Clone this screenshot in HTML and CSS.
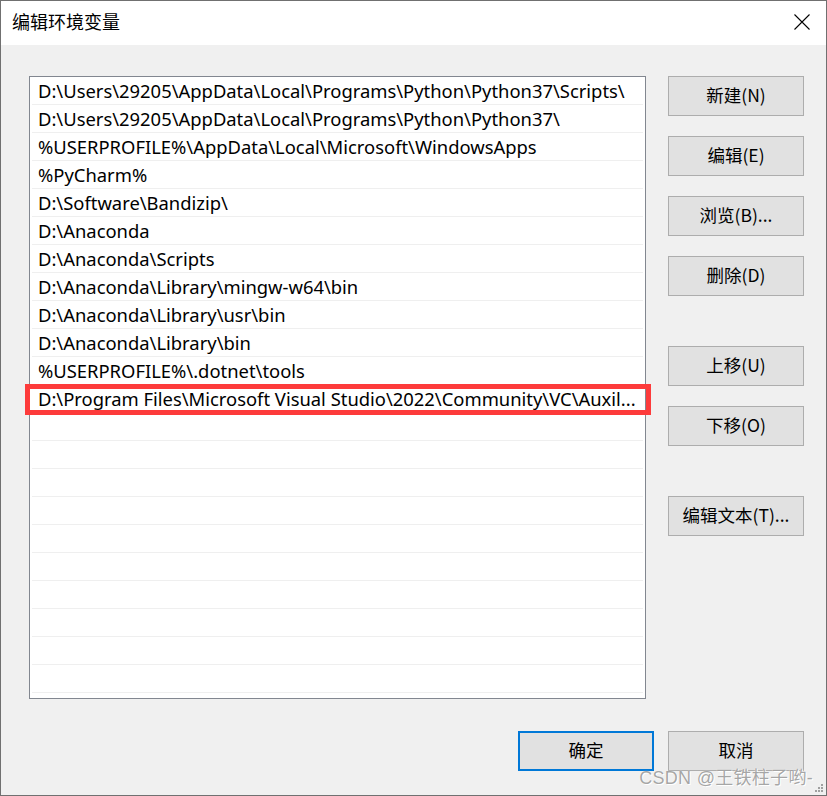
FILE: index.html
```html
<!DOCTYPE html>
<html lang="zh-CN">
<head>
<meta charset="utf-8">
<title>编辑环境变量</title>
<link rel="stylesheet" href="styles.css">
</head>
<body>
<div class="window">
  <div class="titlebar">
    <span class="title">编辑环境变量</span>
    <svg class="close" width="16" height="16" viewBox="0 0 16 16" aria-label="关闭">
      <path d="M0.5 0.5 L15.5 15.5 M15.5 0.5 L0.5 15.5" stroke="#000" stroke-width="1.1" fill="none"/>
    </svg>
  </div>
  <div class="content">
    <div class="main">
      <div class="list">
        <div class="row"><span class="text">D:\Users\29205\AppData\Local\Programs\Python\Python37\Scripts\</span></div>
        <div class="row"><span class="text">D:\Users\29205\AppData\Local\Programs\Python\Python37\</span></div>
        <div class="row"><span class="text">%USERPROFILE%\AppData\Local\Microsoft\WindowsApps</span></div>
        <div class="row"><span class="text">%PyCharm%</span></div>
        <div class="row"><span class="text">D:\Software\Bandizip\</span></div>
        <div class="row"><span class="text">D:\Anaconda</span></div>
        <div class="row"><span class="text">D:\Anaconda\Scripts</span></div>
        <div class="row"><span class="text">D:\Anaconda\Library\mingw-w64\bin</span></div>
        <div class="row"><span class="text">D:\Anaconda\Library\usr\bin</span></div>
        <div class="row"><span class="text">D:\Anaconda\Library\bin</span></div>
        <div class="row"><span class="text">%USERPROFILE%\.dotnet\tools</span></div>
        <div class="row row-marked"><span class="text">D:\Program Files\Microsoft Visual Studio\2022\Community\VC\Auxil...</span><span class="mark"></span></div>
        <div class="row"></div>
        <div class="row"></div>
        <div class="row"></div>
        <div class="row"></div>
        <div class="row"></div>
        <div class="row"></div>
        <div class="row"></div>
        <div class="row"></div>
        <div class="row"></div>
        <div class="row"></div>
      </div>
      <div class="side">
        <button class="btn">新建(N)</button>
        <button class="btn">编辑(E)</button>
        <button class="btn">浏览(B)...</button>
        <button class="btn">删除(D)</button>
        <button class="btn btn-spaced">上移(U)</button>
        <button class="btn">下移(O)</button>
        <button class="btn btn-spaced">编辑文本(T)...</button>
      </div>
    </div>
    <div class="footer">
      <button class="btn btn-default">确定</button>
      <button class="btn">取消</button>
    </div>
  </div>
  <div class="watermark">CSDN @王铁柱子哟-</div>
  <div class="grip">
    <i></i><i></i><i></i><i></i><i></i><i></i>
  </div>
</div>
</body>
</html>
```

FILE: styles.css
```css
* {
  box-sizing: border-box;
}

html, body {
  margin: 0;
  padding: 0;
  background: #f0f0f0;
}

body {
  font-family: "Noto Sans", "Noto Sans CJK SC", sans-serif;
  color: #000;
}

.window {
  position: relative;
  width: 827px;
  height: 796px;
  border: 1px solid #707070;
  background: #f0f0f0;
  display: flex;
  flex-direction: column;
}

.titlebar {
  height: 44px;
  background: #fff;
  display: flex;
  align-items: center;
  justify-content: space-between;
  padding: 0 16px 0 11px;
  flex: none;
}

.title {
  font-family: "Noto Sans CJK SC", sans-serif;
  font-size: 18px;
  line-height: 1.2;
  margin-top: -2px;
}

.close {
  display: block;
  margin-top: -3px;
}

.content {
  padding: 31px 0 0 28px;
}

.main {
  display: flex;
  gap: 22px;
}

.list {
  width: 617px;
  height: 623px;
  background: #fff;
  border: 1px solid #828790;
  padding: 0 2px;
  flex: none;
}

.row {
  position: relative;
  height: 28px;
  border-bottom: 1px solid #efefef;
  padding: 0 6px;
  display: flex;
  align-items: center;
}

.text {
  font-size: 18.4px;
  line-height: 26px;
  white-space: nowrap;
  margin-top: 1px;
}

.row-marked .text {
  position: relative;
  z-index: 1;
}

.mark {
  position: absolute;
  left: -7px;
  right: -8px;
  top: -1px;
  bottom: -3px;
  border: 5px solid #fd3b3b;
}

.side {
  display: flex;
  flex-direction: column;
  gap: 20px;
}

.btn {
  width: 136px;
  height: 40px;
  background: #e1e1e1;
  border: 1px solid #adadad;
  font-family: "Noto Sans CJK SC", sans-serif;
  font-size: 17.5px;
  color: #000;
  padding: 0 0 3px;
  margin: 0;
  line-height: 1.2;
}

.btn-spaced {
  margin-top: 30px;
}

.footer {
  display: flex;
  justify-content: flex-end;
  gap: 14px;
  padding-right: 22px;
  margin-top: 32px;
}

.btn-default {
  border: 2px solid #0078d7;
  width: 136px;
}

.watermark {
  position: absolute;
  right: 13px;
  bottom: 5px;
  font-family: "Liberation Sans", "Noto Sans CJK SC", sans-serif;
  font-size: 18px;
  line-height: 1.2;
  color: rgba(150, 150, 150, 0.85);
  text-shadow: 0 0 1px #fff, 1px 1px 0 #fff;
  letter-spacing: 0.3px;
}

.grip {
  position: absolute;
  right: 3px;
  bottom: 3px;
  width: 8px;
  height: 8px;
}

.grip i {
  position: absolute;
  width: 2px;
  height: 2px;
  background: #a0a0a0;
}

.grip i:nth-child(1) { right: 0; bottom: 0; }
.grip i:nth-child(2) { right: 3px; bottom: 0; }
.grip i:nth-child(3) { right: 6px; bottom: 0; }
.grip i:nth-child(4) { right: 0; bottom: 3px; }
.grip i:nth-child(5) { right: 3px; bottom: 3px; }
.grip i:nth-child(6) { right: 0; bottom: 6px; }
```
